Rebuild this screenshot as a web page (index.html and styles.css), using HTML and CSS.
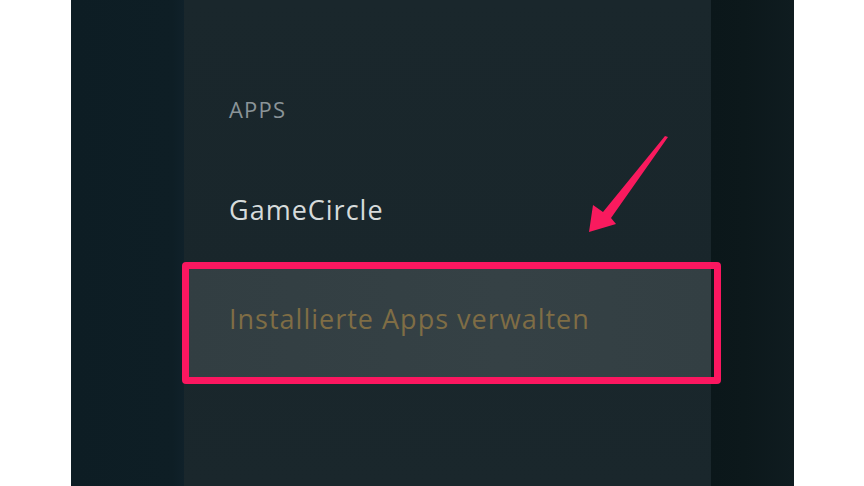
FILE: index.html
```html
<!DOCTYPE html>
<html lang="de">
<head>
    <meta charset="UTF-8">
    <meta name="viewport" content="width=device-width, initial-scale=1.0">
    <title>Einstellungen - Apps</title>
    <link rel="stylesheet" href="styles.css">
</head>
<body>
    <div class="screen">
        <div class="side"></div>
        <div class="menu">
            <p class="heading">APPS</p>
            <div class="row">GameCircle</div>
            <div class="row active">Installierte Apps verwalten</div>
            <div class="frame"></div>
            <svg class="arrow" width="90" height="105" viewBox="580 132 90 105">
                <polygon points="668,137 611,218 616,224 589,232 593,205 603,212 665,136" fill="#f91a5e"/>
            </svg>
        </div>
        <div class="rest"></div>
    </div>
</body>
</html>
```

FILE: styles.css
```css
*{
    box-sizing: border-box;
    margin: 0;
    padding: 0;
}
body{
    background: #ffffff;
    font-family: "Open Sans", "Noto Sans", sans-serif;
    height: 486px;
    overflow: hidden;
}
.screen{
    margin-left: 71px;
    width: 723px;
    height: 486px;
    display: flex;
}
.side{
    width: 113px;
    background: linear-gradient(90deg, #0d1d24, #0e1e25 90%, #10212a);
}
.menu{
    position: relative;
    width: 527px;
    background: linear-gradient(180deg, #1a272c, #19262b 60%, #1a272c);
    padding-top: 94px;
}
.rest{
    flex: 1;
    background: linear-gradient(90deg, #0b171a, #0c181b 40%, #0f1c20);
}
.heading{
    padding-left: 45px;
    font-size: 22px;
    letter-spacing: 1.2px;
    color: #8a9498;
    height: 65px;
}
.row{
    height: 109px;
    display: flex;
    align-items: center;
    padding-left: 45px;
    padding-bottom: 8px;
    font-size: 27px;
    letter-spacing: 1px;
    color: #d6dbdb;
}
.active{
    margin-left: 3px;
    padding-left: 42px;
    background: linear-gradient(90deg, #323e42, #354145 60%, #333f43);
    color: #7f6d45;
}
.frame{
    position: absolute;
    left: -2px;
    top: 262px;
    width: 539px;
    height: 122px;
    border: 7px solid #fb1760;
    border-radius: 4px;
}
.arrow{
    position: absolute;
    left: 396px;
    top: 132px;
}
```
